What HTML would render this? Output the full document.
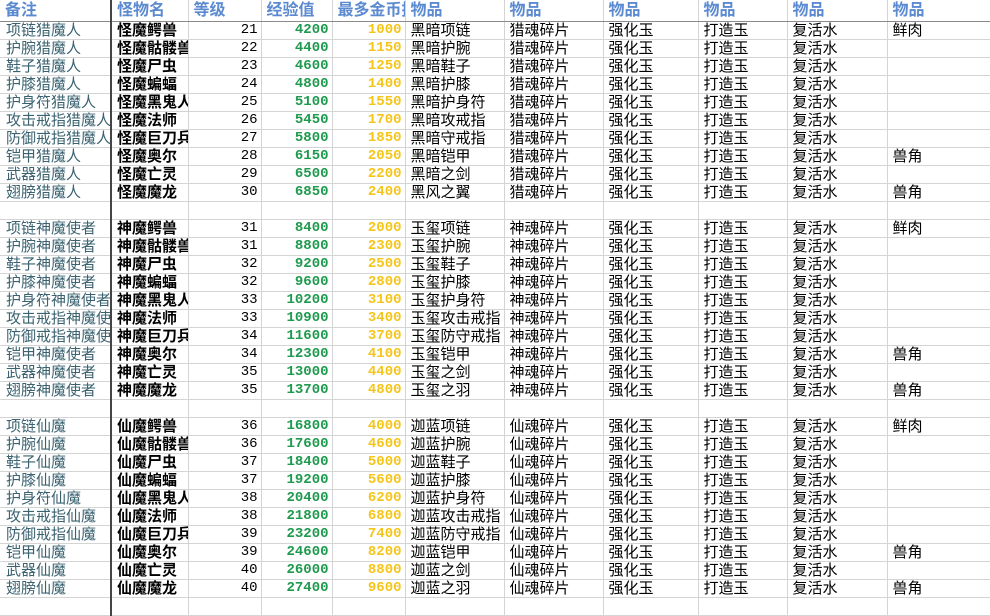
<!DOCTYPE html>
<html><head><meta charset="utf-8"><style>
body{margin:0;width:990px;height:611px;overflow:hidden;background:#fff;font-family:"Liberation Sans","Noto Sans CJK SC",sans-serif;}
table{border-collapse:collapse;table-layout:fixed;width:990px;}
td{height:17px;padding:0 0 0 5px;border-right:1px solid #d4d4d4;border-bottom:1px solid #d4d4d4;font-size:15px;line-height:17px;white-space:nowrap;overflow:hidden;color:#000;}
tr.h td{height:21px;line-height:21px;color:#5b8ad0;font-weight:bold;font-size:16px;border-bottom:1.5px solid #8a8a8a;}
td.a{color:#3a6270;padding-left:6px;}
td:first-child{border-right:2px solid #444;}
td.b{font-weight:bold;}
td.n{text-align:right;padding:0 3px 0 0;font-family:"Liberation Mono",monospace;font-size:14px;}
td.g{color:#1e9a4e;font-weight:bold;}
td.y{color:#f5c518;font-weight:bold;}
</style></head><body>
<table>
<colgroup><col style="width:111px"><col style="width:77px"><col style="width:73px"><col style="width:71px"><col style="width:73px"><col style="width:99px"><col style="width:99px"><col style="width:95px"><col style="width:89px"><col style="width:100px"><col style="width:103px"></colgroup>
<tr class="h"><td>备注</td><td>怪物名</td><td>等级</td><td>经验值</td><td>最多金币掉落</td><td>物品</td><td>物品</td><td>物品</td><td>物品</td><td>物品</td><td>物品</td></tr>
<tr><td class="a">项链猎魔人</td><td class="b">怪魔鳄兽</td><td class="n">21</td><td class="n g">4200</td><td class="n y">1000</td><td>黑暗项链</td><td>猎魂碎片</td><td>强化玉</td><td>打造玉</td><td>复活水</td><td>鲜肉</td></tr>
<tr><td class="a">护腕猎魔人</td><td class="b">怪魔骷髅兽</td><td class="n">22</td><td class="n g">4400</td><td class="n y">1150</td><td>黑暗护腕</td><td>猎魂碎片</td><td>强化玉</td><td>打造玉</td><td>复活水</td><td></td></tr>
<tr><td class="a">鞋子猎魔人</td><td class="b">怪魔尸虫</td><td class="n">23</td><td class="n g">4600</td><td class="n y">1250</td><td>黑暗鞋子</td><td>猎魂碎片</td><td>强化玉</td><td>打造玉</td><td>复活水</td><td></td></tr>
<tr><td class="a">护膝猎魔人</td><td class="b">怪魔蝙蝠</td><td class="n">24</td><td class="n g">4800</td><td class="n y">1400</td><td>黑暗护膝</td><td>猎魂碎片</td><td>强化玉</td><td>打造玉</td><td>复活水</td><td></td></tr>
<tr><td class="a">护身符猎魔人</td><td class="b">怪魔黑鬼人</td><td class="n">25</td><td class="n g">5100</td><td class="n y">1550</td><td>黑暗护身符</td><td>猎魂碎片</td><td>强化玉</td><td>打造玉</td><td>复活水</td><td></td></tr>
<tr><td class="a">攻击戒指猎魔人</td><td class="b">怪魔法师</td><td class="n">26</td><td class="n g">5450</td><td class="n y">1700</td><td>黑暗攻戒指</td><td>猎魂碎片</td><td>强化玉</td><td>打造玉</td><td>复活水</td><td></td></tr>
<tr><td class="a">防御戒指猎魔人</td><td class="b">怪魔巨刀兵</td><td class="n">27</td><td class="n g">5800</td><td class="n y">1850</td><td>黑暗守戒指</td><td>猎魂碎片</td><td>强化玉</td><td>打造玉</td><td>复活水</td><td></td></tr>
<tr><td class="a">铠甲猎魔人</td><td class="b">怪魔奥尔</td><td class="n">28</td><td class="n g">6150</td><td class="n y">2050</td><td>黑暗铠甲</td><td>猎魂碎片</td><td>强化玉</td><td>打造玉</td><td>复活水</td><td>兽角</td></tr>
<tr><td class="a">武器猎魔人</td><td class="b">怪魔亡灵</td><td class="n">29</td><td class="n g">6500</td><td class="n y">2200</td><td>黑暗之剑</td><td>猎魂碎片</td><td>强化玉</td><td>打造玉</td><td>复活水</td><td></td></tr>
<tr><td class="a">翅膀猎魔人</td><td class="b">怪魔魔龙</td><td class="n">30</td><td class="n g">6850</td><td class="n y">2400</td><td>黑风之翼</td><td>猎魂碎片</td><td>强化玉</td><td>打造玉</td><td>复活水</td><td>兽角</td></tr>
<tr><td></td><td></td><td></td><td></td><td></td><td></td><td></td><td></td><td></td><td></td><td></td></tr>
<tr><td class="a">项链神魔使者</td><td class="b">神魔鳄兽</td><td class="n">31</td><td class="n g">8400</td><td class="n y">2000</td><td>玉玺项链</td><td>神魂碎片</td><td>强化玉</td><td>打造玉</td><td>复活水</td><td>鲜肉</td></tr>
<tr><td class="a">护腕神魔使者</td><td class="b">神魔骷髅兽</td><td class="n">31</td><td class="n g">8800</td><td class="n y">2300</td><td>玉玺护腕</td><td>神魂碎片</td><td>强化玉</td><td>打造玉</td><td>复活水</td><td></td></tr>
<tr><td class="a">鞋子神魔使者</td><td class="b">神魔尸虫</td><td class="n">32</td><td class="n g">9200</td><td class="n y">2500</td><td>玉玺鞋子</td><td>神魂碎片</td><td>强化玉</td><td>打造玉</td><td>复活水</td><td></td></tr>
<tr><td class="a">护膝神魔使者</td><td class="b">神魔蝙蝠</td><td class="n">32</td><td class="n g">9600</td><td class="n y">2800</td><td>玉玺护膝</td><td>神魂碎片</td><td>强化玉</td><td>打造玉</td><td>复活水</td><td></td></tr>
<tr><td class="a">护身符神魔使者</td><td class="b">神魔黑鬼人</td><td class="n">33</td><td class="n g">10200</td><td class="n y">3100</td><td>玉玺护身符</td><td>神魂碎片</td><td>强化玉</td><td>打造玉</td><td>复活水</td><td></td></tr>
<tr><td class="a">攻击戒指神魔使者</td><td class="b">神魔法师</td><td class="n">33</td><td class="n g">10900</td><td class="n y">3400</td><td>玉玺攻击戒指</td><td>神魂碎片</td><td>强化玉</td><td>打造玉</td><td>复活水</td><td></td></tr>
<tr><td class="a">防御戒指神魔使者</td><td class="b">神魔巨刀兵</td><td class="n">34</td><td class="n g">11600</td><td class="n y">3700</td><td>玉玺防守戒指</td><td>神魂碎片</td><td>强化玉</td><td>打造玉</td><td>复活水</td><td></td></tr>
<tr><td class="a">铠甲神魔使者</td><td class="b">神魔奥尔</td><td class="n">34</td><td class="n g">12300</td><td class="n y">4100</td><td>玉玺铠甲</td><td>神魂碎片</td><td>强化玉</td><td>打造玉</td><td>复活水</td><td>兽角</td></tr>
<tr><td class="a">武器神魔使者</td><td class="b">神魔亡灵</td><td class="n">35</td><td class="n g">13000</td><td class="n y">4400</td><td>玉玺之剑</td><td>神魂碎片</td><td>强化玉</td><td>打造玉</td><td>复活水</td><td></td></tr>
<tr><td class="a">翅膀神魔使者</td><td class="b">神魔魔龙</td><td class="n">35</td><td class="n g">13700</td><td class="n y">4800</td><td>玉玺之羽</td><td>神魂碎片</td><td>强化玉</td><td>打造玉</td><td>复活水</td><td>兽角</td></tr>
<tr><td></td><td></td><td></td><td></td><td></td><td></td><td></td><td></td><td></td><td></td><td></td></tr>
<tr><td class="a">项链仙魔</td><td class="b">仙魔鳄兽</td><td class="n">36</td><td class="n g">16800</td><td class="n y">4000</td><td>迦蓝项链</td><td>仙魂碎片</td><td>强化玉</td><td>打造玉</td><td>复活水</td><td>鲜肉</td></tr>
<tr><td class="a">护腕仙魔</td><td class="b">仙魔骷髅兽</td><td class="n">36</td><td class="n g">17600</td><td class="n y">4600</td><td>迦蓝护腕</td><td>仙魂碎片</td><td>强化玉</td><td>打造玉</td><td>复活水</td><td></td></tr>
<tr><td class="a">鞋子仙魔</td><td class="b">仙魔尸虫</td><td class="n">37</td><td class="n g">18400</td><td class="n y">5000</td><td>迦蓝鞋子</td><td>仙魂碎片</td><td>强化玉</td><td>打造玉</td><td>复活水</td><td></td></tr>
<tr><td class="a">护膝仙魔</td><td class="b">仙魔蝙蝠</td><td class="n">37</td><td class="n g">19200</td><td class="n y">5600</td><td>迦蓝护膝</td><td>仙魂碎片</td><td>强化玉</td><td>打造玉</td><td>复活水</td><td></td></tr>
<tr><td class="a">护身符仙魔</td><td class="b">仙魔黑鬼人</td><td class="n">38</td><td class="n g">20400</td><td class="n y">6200</td><td>迦蓝护身符</td><td>仙魂碎片</td><td>强化玉</td><td>打造玉</td><td>复活水</td><td></td></tr>
<tr><td class="a">攻击戒指仙魔</td><td class="b">仙魔法师</td><td class="n">38</td><td class="n g">21800</td><td class="n y">6800</td><td>迦蓝攻击戒指</td><td>仙魂碎片</td><td>强化玉</td><td>打造玉</td><td>复活水</td><td></td></tr>
<tr><td class="a">防御戒指仙魔</td><td class="b">仙魔巨刀兵</td><td class="n">39</td><td class="n g">23200</td><td class="n y">7400</td><td>迦蓝防守戒指</td><td>仙魂碎片</td><td>强化玉</td><td>打造玉</td><td>复活水</td><td></td></tr>
<tr><td class="a">铠甲仙魔</td><td class="b">仙魔奥尔</td><td class="n">39</td><td class="n g">24600</td><td class="n y">8200</td><td>迦蓝铠甲</td><td>仙魂碎片</td><td>强化玉</td><td>打造玉</td><td>复活水</td><td>兽角</td></tr>
<tr><td class="a">武器仙魔</td><td class="b">仙魔亡灵</td><td class="n">40</td><td class="n g">26000</td><td class="n y">8800</td><td>迦蓝之剑</td><td>仙魂碎片</td><td>强化玉</td><td>打造玉</td><td>复活水</td><td></td></tr>
<tr><td class="a">翅膀仙魔</td><td class="b">仙魔魔龙</td><td class="n">40</td><td class="n g">27400</td><td class="n y">9600</td><td>迦蓝之羽</td><td>仙魂碎片</td><td>强化玉</td><td>打造玉</td><td>复活水</td><td>兽角</td></tr>
<tr><td></td><td></td><td></td><td></td><td></td><td></td><td></td><td></td><td></td><td></td><td></td></tr>
</table>
</body></html>
